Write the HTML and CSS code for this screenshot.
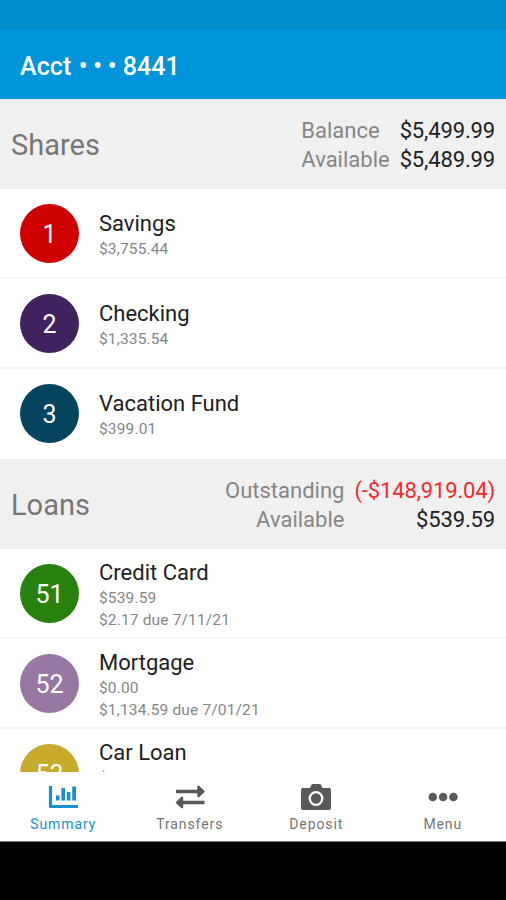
FILE: index.html
```html
<!DOCTYPE html>
<html lang="en">
<head>
    <meta charset="UTF-8">
    <meta name="viewport" content="width=device-width, initial-scale=1.0">
    <title>Account Summary</title>
    <link rel="stylesheet" href="styles.css">
</head>
<body>
    <div class="status-bar"></div>
    <header class="app-header">
        <h1>Acct <span class="dots">• • •</span> 8441</h1>
    </header>

    <main class="accounts">
        <section>
            <div class="section-header">
                <h2>Shares</h2>
                <dl class="totals">
                    <dt>Balance</dt>
                    <dd>$5,499.99</dd>
                    <dt>Available</dt>
                    <dd>$5,489.99</dd>
                </dl>
            </div>
            <div class="account">
                <div class="badge savings">1</div>
                <div class="info">
                    <h3>Savings</h3>
                    <p>$3,755.44</p>
                </div>
            </div>
            <div class="account">
                <div class="badge checking">2</div>
                <div class="info">
                    <h3>Checking</h3>
                    <p>$1,335.54</p>
                </div>
            </div>
            <div class="account">
                <div class="badge vacation">3</div>
                <div class="info">
                    <h3>Vacation Fund</h3>
                    <p>$399.01</p>
                </div>
            </div>
        </section>

        <section>
            <div class="section-header">
                <h2>Loans</h2>
                <dl class="totals totals-right">
                    <dt>Outstanding</dt>
                    <dd class="negative">(-$148,919.04)</dd>
                    <dt>Available</dt>
                    <dd>$539.59</dd>
                </dl>
            </div>
            <div class="account">
                <div class="badge credit">51</div>
                <div class="info">
                    <h3>Credit Card</h3>
                    <p>$539.59</p>
                    <p>$2.17 due 7/11/21</p>
                </div>
            </div>
            <div class="account">
                <div class="badge mortgage">52</div>
                <div class="info">
                    <h3>Mortgage</h3>
                    <p>$0.00</p>
                    <p>$1,134.59 due 7/01/21</p>
                </div>
            </div>
            <div class="account">
                <div class="badge car">53</div>
                <div class="info">
                    <h3>Car Loan</h3>
                    <p>$0.00</p>
                    <p>&nbsp;</p>
                </div>
            </div>
        </section>
    </main>

    <nav class="tab-bar">
        <a class="tab active">
            <svg width="32" height="26" viewBox="0 0 32 26">
                <path d="M3.500 2v20.500h27.500" fill="none" stroke="currentColor" stroke-width="3.200" stroke-linejoin="round"/>
                <path d="M9 11.500h3.600v5H9zM14.400 4H18v12.500h-3.600zM19.800 8h3.600v8.500h-3.600zM25.200 2.500h3.800v14h-3.800z" fill="currentColor"/>
            </svg>
            <span>Summary</span>
        </a>
        <a class="tab">
            <svg width="32" height="26" viewBox="0 0 32 26">
                <path d="M2 7.500H25M30.500 18.500H7" fill="none" stroke="currentColor" stroke-width="3.400"/>
                <path d="M24.500 2.800L29.500 7.500L24.500 12.200zM8 13.800L3 18.500L8 23.200z" fill="currentColor" stroke="currentColor" stroke-width="2.400" stroke-linejoin="round"/>
            </svg>
            <span>Transfers</span>
        </a>
        <a class="tab">
            <svg width="32" height="26" viewBox="0 0 32 26">
                <path d="M3 4h7l1.500-3.200Q11.900 0 13 0h6.500q1 0 1.500.8L22.500 4H29q2 0 2 2v18q0 2-2 2H3q-2 0-2-2V6q0-2 2-2z" fill="currentColor"/>
                <circle cx="16" cy="14.500" r="6.300" fill="none" stroke="#fff" stroke-width="2.300"/>
            </svg>
            <span>Deposit</span>
        </a>
        <a class="tab">
            <svg width="32" height="26" viewBox="0 0 32 26">
                <g fill="currentColor">
                    <circle cx="5.800" cy="13" r="4.300"/>
                    <circle cx="16.100" cy="13" r="4.300"/>
                    <circle cx="26.400" cy="13" r="4.300"/>
                </g>
            </svg>
            <span>Menu</span>
        </a>
    </nav>
    <div class="system-bar"></div>
</body>
</html>
```
FILE: styles.css
```css
:root {
    --primary-color: #0095da;
    --primary-dark: #008dcf;
    --header-bg: #f0f0f0;
    --text: #202020;
    --muted: #868686;
}

* {
    margin: 0;
    padding: 0;
    box-sizing: border-box;
}

body {
    height: 900px;
    display: flex;
    flex-direction: column;
    background: #fff;
    color: var(--text);
    font-family: Roboto, 'Liberation Sans', sans-serif;
    overflow: hidden;
}

.status-bar {
    flex: none;
    height: 30px;
    background: var(--primary-dark);
}

.app-header {
    flex: none;
    height: 69px;
    padding: 3px 20px 0;
    display: flex;
    align-items: center;
    background: var(--primary-color);
    color: #fff;
}

.app-header h1 {
    font-size: 25px;
    font-weight: 500;
    letter-spacing: 0.1px;
}

.dots {
    margin-left: 1px;
    letter-spacing: -0.2px;
}

.accounts {
    flex: none;
    height: 673px;
    overflow: hidden;
}

.section-header {
    height: 90px;
    padding: 0 11px;
    display: flex;
    justify-content: space-between;
    align-items: center;
    background: var(--header-bg);
}

.section-header h2 {
    padding-top: 1px;
    font-size: 29px;
    font-weight: 400;
    color: #777;
}

.totals {
    display: grid;
    grid-template-columns: auto auto;
    column-gap: 10px;
    font-size: 22px;
    line-height: 29.5px;
    padding-top: 2px;
}

.totals dt {
    color: var(--muted);
}

.totals dd {
    text-align: right;
    letter-spacing: -0.15px;
}

.totals-right dt {
    text-align: right;
}

.totals .negative {
    color: #f22a2a;
}

.account {
    height: 90px;
    padding: 0 20px;
    display: flex;
    align-items: center;
    gap: 20px;
    border-bottom: 2px solid #f6f6f6;
}

.account:last-child {
    border-bottom-color: transparent;
}

.badge {
    width: 59px;
    height: 59px;
    border-radius: 50%;
    display: flex;
    justify-content: center;
    align-items: center;
    padding-top: 3px;
    color: #fff;
    font-size: 25px;
}

.savings { background: #cf0000; }
.checking { background: #40225e; }
.vacation { background: #04445f; }
.credit { background: #28800f; }
.mortgage { background: #9878a2; }
.car { background: #c8aa2c; }

.info {
    padding-top: 4px;
}

.info h3 {
    margin-bottom: 1px;
    font-size: 22px;
    font-weight: 400;
    line-height: 27px;
}

.info p {
    font-size: 15.5px;
    line-height: 22px;
    letter-spacing: 0.15px;
    color: var(--muted);
}

.tab-bar {
    flex: none;
    height: 70px;
    display: flex;
    background: #fff;
    border-bottom: 1px solid #777;
}

.tab {
    flex: 1;
    display: flex;
    flex-direction: column;
    align-items: center;
    padding-top: 12px;
    gap: 5px;
    color: #595959;
}

.tab span {
    font-size: 14px;
    line-height: 18px;
    letter-spacing: 0.9px;
    color: #757575;
}

.tab.active,
.tab.active span {
    color: #1b8fd2;
}

.system-bar {
    flex: 1;
    background: #000;
}
```
